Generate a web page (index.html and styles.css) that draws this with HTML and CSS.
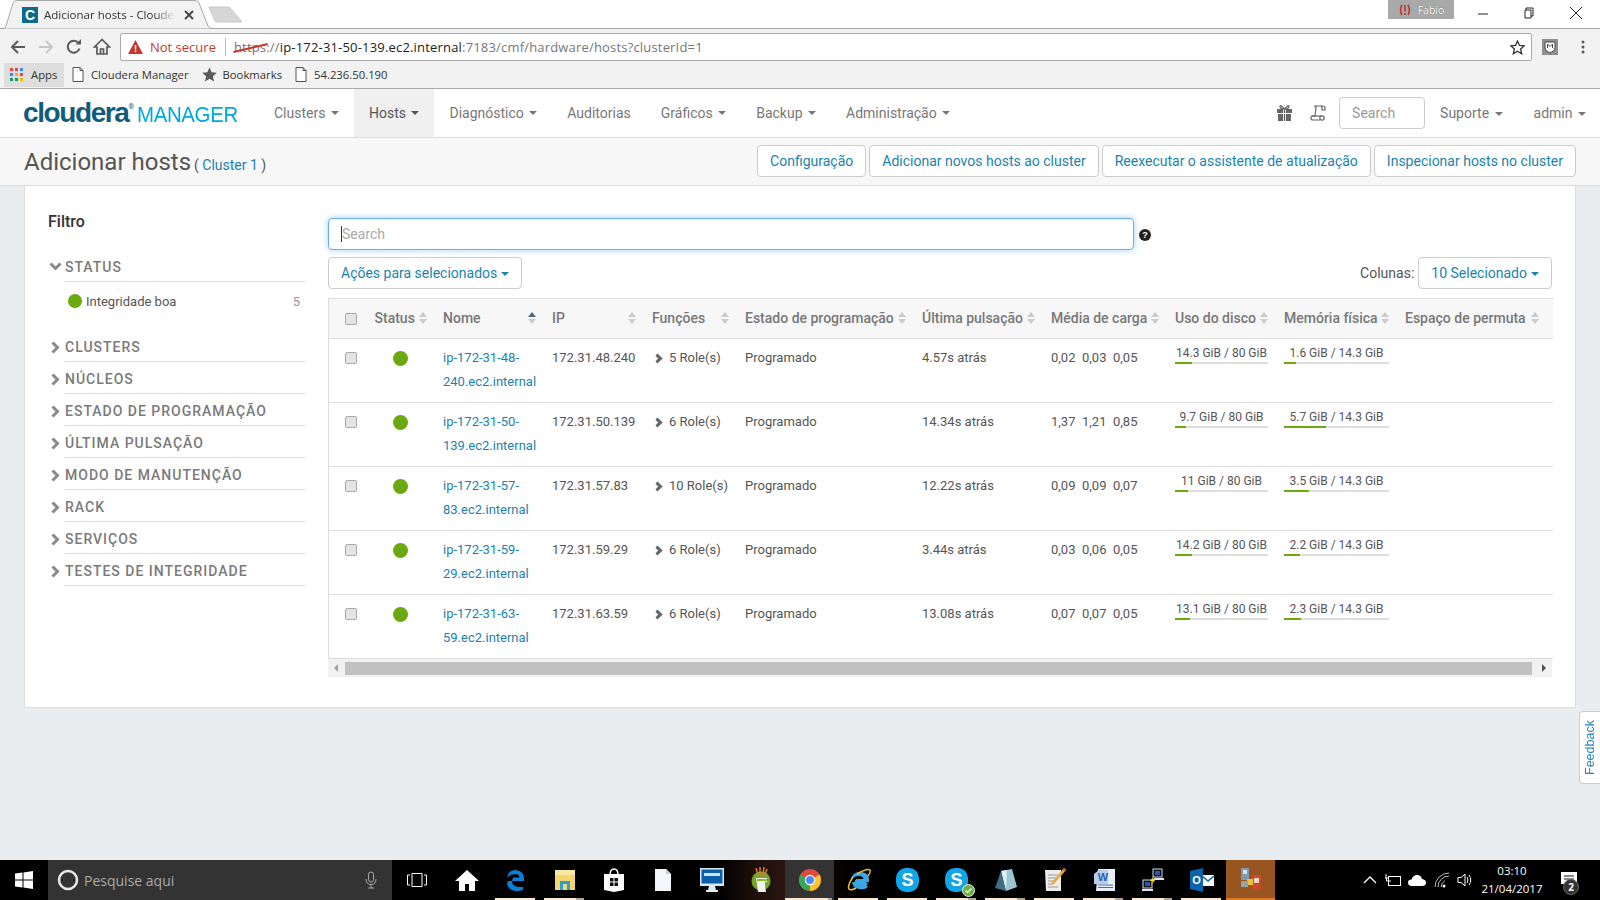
FILE: index.html
```html
<!DOCTYPE html>
<html lang="pt">
<head>
<meta charset="utf-8">
<title>Adicionar hosts - Cloudera Manager</title>
<link rel="stylesheet" href="styles.css">
</head>
<body>
<div class="screen">
  <header class="browser">
    <div class="tabstrip">
      <div class="tab">
        <svg class="tab-shape" width="214" height="29" viewBox="0 0 214 29"><path d="M0 28.500H3Q5 28.500 6 26L13 3Q14 .5 17 .5H195Q198 .5 199 3L208 26Q209 28.500 212 28.500H214" fill="#f2f2f2" stroke="#a8a8a8"/></svg>
        <span class="tab-favicon">C</span>
        <span class="tab-title">Adicionar hosts - Cloude</span>
        <svg class="tab-close" width="10" height="10" viewBox="0 0 10 10"><path d="M1 1L9 9M9 1L1 9" stroke="#444" stroke-width="1.800"/></svg>
      </div>
      <svg class="newtab" width="36" height="18" viewBox="0 0 36 18"><path d="M1 1H20Q22 1 23 3L34 16H9Q7 16 6.500 14Z" fill="#d6d6d6" stroke="#c8c8c8"/></svg>
      <div class="strip-fill"></div>
      <div class="profile"><svg width="14" height="12" viewBox="0 0 14 12"><path d="M4 1Q1 6 4 11M10 1Q13 6 10 11" fill="none" stroke="#c0352b" stroke-width="1.600"/><path d="M7 1V7.500M7 9V11" stroke="#c0352b" stroke-width="1.600"/></svg><span>Fabio</span></div>
      <div class="winctl">
        <svg width="12" height="12" viewBox="0 0 12 12"><path d="M1 7H11" stroke="#222" stroke-width="1"/></svg>
        <svg width="12" height="12" viewBox="0 0 12 12"><path d="M3 3V1H10V9H8M2 3H8V11H2Z" fill="none" stroke="#222"/></svg>
        <svg width="14" height="14" viewBox="0 0 14 14"><path d="M1 1L13 13M13 1L1 13" stroke="#222"/></svg>
      </div>
    </div>
    <div class="toolbar">
      <svg class="tool" width="16" height="16" viewBox="0 0 16 16"><path d="M15 8H2M8 2L2 8L8 14" fill="none" stroke="#5a5a5a" stroke-width="2"/></svg>
      <svg class="tool" width="16" height="16" viewBox="0 0 16 16"><path d="M1 8H14M8 2L14 8L8 14" fill="none" stroke="#c8c8c8" stroke-width="2"/></svg>
      <svg class="tool" width="16" height="16" viewBox="0 0 16 16"><path d="M13.500 9.500A6 6 0 1 1 12.500 4" fill="none" stroke="#5a5a5a" stroke-width="2"/><path d="M9.500 5.500H15V0Z" fill="#5a5a5a"/></svg>
      <svg class="tool tool-home" width="18" height="18" viewBox="0 0 18 18"><path d="M9 1.500L1.500 9H4V16H14V9H16.500ZM7.500 16V11H10.500V16" fill="none" stroke="#5a5a5a" stroke-width="1.700"/></svg>
      <div class="omnibox">
        <svg width="15" height="14" viewBox="0 0 15 14"><path d="M7.500 0L15 14H0Z" fill="#c5392b"/><path d="M7.500 5V9.500M7.500 10.500V12" stroke="#fff" stroke-width="1.500"/></svg>
        <span class="notsecure">Not secure</span>
        <span class="omni-sep"></span>
        <span class="url"><span class="https">https</span><span class="url-dim">://</span>ip-172-31-50-139.ec2.internal<span class="url-dim">:7183/cmf/hardware/hosts?clusterId=1</span></span>
        <svg class="omni-star" width="15" height="15" viewBox="0 0 15 15"><path d="M7.500 1L9.400 5.500L14.200 5.900L10.600 9L11.700 13.800L7.500 11.300L3.300 13.800L4.400 9L.8 5.900L5.600 5.500Z" fill="none" stroke="#333" stroke-width="1.300"/></svg>
      </div>
      <svg class="ext" width="16" height="16" viewBox="0 0 16 16"><rect width="16" height="16" fill="#8f8f8f"/><path d="M3 3H13V9Q13 12 8 14Q3 12 3 9Z" fill="#fff" stroke="#444"/><path d="M5.500 9V5L8 7.500L10.500 5V9" fill="none" stroke="#444"/></svg>
      <svg class="kebab" width="4" height="14" viewBox="0 0 4 14"><circle cx="2" cy="2" r="1.500" fill="#5a5a5a"/><circle cx="2" cy="7" r="1.500" fill="#5a5a5a"/><circle cx="2" cy="12" r="1.500" fill="#5a5a5a"/></svg>
    </div>
    <div class="bookmarks">
      <div class="bm bm-apps">
        <svg width="14" height="14" viewBox="0 0 14 14"><g><rect x="0" y="0" width="3" height="3" fill="#e8453c"/><rect x="5" y="0" width="3" height="3" fill="#e8453c"/><rect x="10" y="0" width="3" height="3" fill="#4285f4"/><rect x="0" y="5" width="3" height="3" fill="#4285f4"/><rect x="5" y="5" width="3" height="3" fill="#f4b400"/><rect x="10" y="5" width="3" height="3" fill="#e8453c"/><rect x="0" y="10" width="3" height="3" fill="#0f9d58"/><rect x="5" y="10" width="3" height="3" fill="#0f9d58"/><rect x="10" y="10" width="3" height="3" fill="#f4b400"/></g></svg>
        <span>Apps</span>
      </div>
      <div class="bm">
        <svg width="12" height="15" viewBox="0 0 12 15"><path d="M1 .5H8L11 3.500V14.500H1ZM8 .5V3.500H11" fill="#fff" stroke="#555"/></svg>
        <span>Cloudera Manager</span>
      </div>
      <div class="bm bm-star">
        <svg width="15" height="15" viewBox="0 0 15 15"><path d="M7.500 .5L9.600 5.300L14.800 5.800L10.900 9.200L12 14.400L7.500 11.700L3 14.400L4.100 9.200L.2 5.800L5.400 5.300Z" fill="#5a5a5a"/></svg>
        <span>Bookmarks</span>
      </div>
      <div class="bm">
        <svg width="12" height="15" viewBox="0 0 12 15"><path d="M1 .5H8L11 3.500V14.500H1ZM8 .5V3.500H11" fill="#fff" stroke="#555"/></svg>
        <span>54.236.50.190</span>
      </div>
    </div>
  </header>

  <nav class="navbar">
    <div class="logo"><span class="logo-a">cloudera</span><span class="logo-r">®</span><span class="logo-b">MANAGER</span></div>
    <ul class="menu">
      <li class="menu-item">Clusters<i class="caret"></i></li>
      <li class="menu-item is-active">Hosts<i class="caret"></i></li>
      <li class="menu-item">Diagnóstico<i class="caret"></i></li>
      <li class="menu-item">Auditorias</li>
      <li class="menu-item">Gráficos<i class="caret"></i></li>
      <li class="menu-item">Backup<i class="caret"></i></li>
      <li class="menu-item">Administração<i class="caret"></i></li>
    </ul>
    <div class="nav-right">
      <svg class="nav-icon nav-gift" width="15" height="16" viewBox="0 0 15 16"><path d="M0 4H15V8H0ZM1 9H14V16H1Z" fill="#666"/><path d="M6.500 4V16M8.500 4V16" stroke="#fff" stroke-width=".8"/><path d="M7.500 4Q3 4 3 1.500T7.500 4Q12 4 12 1.500T7.500 4Z" fill="none" stroke="#666" stroke-width="1.200"/></svg>
      <svg class="nav-icon nav-log" width="16" height="16" viewBox="0 0 16 16"><path d="M4 1H13Q15 1 15 3V5H12V3Q12 1 10 1M4 1Q6 1 6 3L5 11H2Q1 11 1 13Q1 15 3 15H10" fill="none" stroke="#666" stroke-width="1.200"/><path d="M2 11H11" stroke="#666" stroke-width="1.200"/><circle cx="12" cy="13" r="2.200" fill="none" stroke="#666" stroke-width="1.200"/></svg>
      <input class="nav-search" type="text" placeholder="Search">
      <span class="nav-link">Suporte<i class="caret"></i></span>
      <span class="nav-link">admin<i class="caret"></i></span>
    </div>
  </nav>

  <div class="titlebar">
    <h1 class="page-title">Adicionar hosts</h1>
    <span class="page-sub">( <a class="link">Cluster 1</a> )</span>
    <div class="title-actions">
      <button class="btn">Configuração</button>
      <button class="btn">Adicionar novos hosts ao cluster</button>
      <button class="btn">Reexecutar o assistente de atualização</button>
      <button class="btn">Inspecionar hosts no cluster</button>
    </div>
  </div>

  <main class="content">
    <section class="card">
      <aside class="filters">
        <h2 class="filters-title">Filtro</h2>
        <div class="facet facet-open">
          <svg class="chev chev-down" width="13" height="9" viewBox="0 0 13 9"><path d="M1.500 1.500L6.500 6.500L11.500 1.500" fill="none" stroke="#8a8a8a" stroke-width="3"/></svg>
          <span class="facet-name">STATUS</span>
        </div>
        <div class="facet-value"><i class="dot dot-sm"></i><span class="facet-label">Integridade boa</span><span class="facet-count">5</span></div>
        <div class="facet facet-first"><svg class="chev" width="9" height="13" viewBox="0 0 9 13"><path d="M1.500 1.500L6.500 6.500L1.500 11.500" fill="none" stroke="#8a8a8a" stroke-width="3"/></svg><span class="facet-name">CLUSTERS</span></div>
        <div class="facet"><svg class="chev" width="9" height="13" viewBox="0 0 9 13"><path d="M1.500 1.500L6.500 6.500L1.500 11.500" fill="none" stroke="#8a8a8a" stroke-width="3"/></svg><span class="facet-name">NÚCLEOS</span></div>
        <div class="facet"><svg class="chev" width="9" height="13" viewBox="0 0 9 13"><path d="M1.500 1.500L6.500 6.500L1.500 11.500" fill="none" stroke="#8a8a8a" stroke-width="3"/></svg><span class="facet-name">ESTADO DE PROGRAMAÇÃO</span></div>
        <div class="facet"><svg class="chev" width="9" height="13" viewBox="0 0 9 13"><path d="M1.500 1.500L6.500 6.500L1.500 11.500" fill="none" stroke="#8a8a8a" stroke-width="3"/></svg><span class="facet-name">ÚLTIMA PULSAÇÃO</span></div>
        <div class="facet"><svg class="chev" width="9" height="13" viewBox="0 0 9 13"><path d="M1.500 1.500L6.500 6.500L1.500 11.500" fill="none" stroke="#8a8a8a" stroke-width="3"/></svg><span class="facet-name">MODO DE MANUTENÇÃO</span></div>
        <div class="facet"><svg class="chev" width="9" height="13" viewBox="0 0 9 13"><path d="M1.500 1.500L6.500 6.500L1.500 11.500" fill="none" stroke="#8a8a8a" stroke-width="3"/></svg><span class="facet-name">RACK</span></div>
        <div class="facet"><svg class="chev" width="9" height="13" viewBox="0 0 9 13"><path d="M1.500 1.500L6.500 6.500L1.500 11.500" fill="none" stroke="#8a8a8a" stroke-width="3"/></svg><span class="facet-name">SERVIÇOS</span></div>
        <div class="facet"><svg class="chev" width="9" height="13" viewBox="0 0 9 13"><path d="M1.500 1.500L6.500 6.500L1.500 11.500" fill="none" stroke="#8a8a8a" stroke-width="3"/></svg><span class="facet-name">TESTES DE INTEGRIDADE</span></div>
      </aside>

      <div class="results">
        <div class="search-row">
          <div class="search-box"><i class="cursor"></i><span class="search-ph">Search</span></div>
          <span class="help">?</span>
        </div>
        <div class="action-row">
          <button class="btn">Ações para selecionados<i class="caret caret-blue"></i></button>
          <div class="columns"><span class="columns-label">Colunas:</span><button class="btn">10 Selecionado<i class="caret caret-blue"></i></button></div>
        </div>
        <table class="hosts">
          <colgroup><col class="c-chk"><col class="c-status"><col class="c-name"><col class="c-ip"><col class="c-roles"><col class="c-state"><col class="c-beat"><col class="c-load"><col class="c-disk"><col class="c-mem"><col class="c-swap"></colgroup>
          <thead>
            <tr>
              <th class="cell-chk"><input class="chk" type="checkbox"></th>
              <th><div class="th-in">Status<i class="sort"></i></div></th>
              <th><div class="th-in">Nome<i class="sort sort-asc"></i></div></th>
              <th><div class="th-in">IP<i class="sort"></i></div></th>
              <th><div class="th-in">Funções<i class="sort"></i></div></th>
              <th><div class="th-in">Estado de programação<i class="sort"></i></div></th>
              <th><div class="th-in">Última pulsação<i class="sort"></i></div></th>
              <th><div class="th-in">Média de carga<i class="sort"></i></div></th>
              <th><div class="th-in">Uso do disco<i class="sort"></i></div></th>
              <th><div class="th-in">Memória física<i class="sort"></i></div></th>
              <th class="th-last"><div class="th-in">Espaço de permuta<i class="sort"></i></div></th>
            </tr>
          </thead>
          <tbody>
            <tr>
              <td class="cell-chk"><input class="chk" type="checkbox"></td><td class="cell-status"><i class="dot"></i></td>
              <td><a class="link">ip-172-31-48-<br>240.ec2.internal</a></td><td>172.31.48.240</td>
              <td><span class="roles"><i class="role-chev"></i>5 Role(s)</span></td><td>Programado</td><td>4.57s atrás</td>
              <td><span class="load">0,02</span><span class="load">0,03</span><span class="load">0,05</span></td>
              <td class="cell-usage"><div class="usage"><span>14.3 GiB / 80 GiB</span><div class="bar"><div class="bar-fill" style="width:18%"></div></div></div></td>
              <td class="cell-usage"><div class="usage"><span>1.6 GiB / 14.3 GiB</span><div class="bar"><div class="bar-fill" style="width:11.500%"></div></div></div></td><td></td>
            </tr>
            <tr>
              <td class="cell-chk"><input class="chk" type="checkbox"></td><td class="cell-status"><i class="dot"></i></td>
              <td><a class="link">ip-172-31-50-<br>139.ec2.internal</a></td><td>172.31.50.139</td>
              <td><span class="roles"><i class="role-chev"></i>6 Role(s)</span></td><td>Programado</td><td>14.34s atrás</td>
              <td><span class="load">1,37</span><span class="load">1,21</span><span class="load">0,85</span></td>
              <td class="cell-usage"><div class="usage"><span>9.7 GiB / 80 GiB</span><div class="bar"><div class="bar-fill" style="width:12%"></div></div></div></td>
              <td class="cell-usage"><div class="usage"><span>5.7 GiB / 14.3 GiB</span><div class="bar"><div class="bar-fill" style="width:40%"></div></div></div></td><td></td>
            </tr>
            <tr>
              <td class="cell-chk"><input class="chk" type="checkbox"></td><td class="cell-status"><i class="dot"></i></td>
              <td><a class="link">ip-172-31-57-<br>83.ec2.internal</a></td><td>172.31.57.83</td>
              <td><span class="roles"><i class="role-chev"></i>10 Role(s)</span></td><td>Programado</td><td>12.22s atrás</td>
              <td><span class="load">0,09</span><span class="load">0,09</span><span class="load">0,07</span></td>
              <td class="cell-usage"><div class="usage"><span>11 GiB / 80 GiB</span><div class="bar"><div class="bar-fill" style="width:14%"></div></div></div></td>
              <td class="cell-usage"><div class="usage"><span>3.5 GiB / 14.3 GiB</span><div class="bar"><div class="bar-fill" style="width:24%"></div></div></div></td><td></td>
            </tr>
            <tr>
              <td class="cell-chk"><input class="chk" type="checkbox"></td><td class="cell-status"><i class="dot"></i></td>
              <td><a class="link">ip-172-31-59-<br>29.ec2.internal</a></td><td>172.31.59.29</td>
              <td><span class="roles"><i class="role-chev"></i>6 Role(s)</span></td><td>Programado</td><td>3.44s atrás</td>
              <td><span class="load">0,03</span><span class="load">0,06</span><span class="load">0,05</span></td>
              <td class="cell-usage"><div class="usage"><span>14.2 GiB / 80 GiB</span><div class="bar"><div class="bar-fill" style="width:18%"></div></div></div></td>
              <td class="cell-usage"><div class="usage"><span>2.2 GiB / 14.3 GiB</span><div class="bar"><div class="bar-fill" style="width:15%"></div></div></div></td><td></td>
            </tr>
            <tr>
              <td class="cell-chk"><input class="chk" type="checkbox"></td><td class="cell-status"><i class="dot"></i></td>
              <td><a class="link">ip-172-31-63-<br>59.ec2.internal</a></td><td>172.31.63.59</td>
              <td><span class="roles"><i class="role-chev"></i>6 Role(s)</span></td><td>Programado</td><td>13.08s atrás</td>
              <td><span class="load">0,07</span><span class="load">0,07</span><span class="load">0,05</span></td>
              <td class="cell-usage"><div class="usage"><span>13.1 GiB / 80 GiB</span><div class="bar"><div class="bar-fill" style="width:16%"></div></div></div></td>
              <td class="cell-usage"><div class="usage"><span>2.3 GiB / 14.3 GiB</span><div class="bar"><div class="bar-fill" style="width:16%"></div></div></div></td><td></td>
            </tr>
          </tbody>
        </table>
        <div class="hscroll">
          <i class="arrow-left"></i>
          <div class="thumb"></div>
          <i class="arrow-right"></i>
        </div>
      </div>
    </section>
    <a class="feedback">Feedback</a>
  </main>

  <footer class="taskbar">
    <div class="start"><svg width="18" height="18" viewBox="0 0 18 18"><path d="M0 2.600L7.500 1.500V8.500H0ZM8.500 1.400L18 0V8.500H8.500ZM0 9.500H7.500V16.500L0 15.400ZM8.500 9.500H18V18L8.500 16.600Z" fill="#fff"/></svg></div>
    <div class="cortana">
      <svg width="22" height="22" viewBox="0 0 22 22"><circle cx="11" cy="11" r="9" fill="none" stroke="#e8e8e8" stroke-width="2.500"/></svg>
      <span class="cortana-text">Pesquise aqui</span>
      <svg class="mic" width="12" height="18" viewBox="0 0 12 18"><rect x="3.500" y="1" width="5" height="10" rx="2.500" fill="none" stroke="#aaa"/><path d="M1 8Q1 13.500 6 13.500T11 8M6 13.500V17M3 17H9" fill="none" stroke="#aaa"/></svg>
    </div>
    <div class="tasks">
      <div class="task task-view"><svg width="20" height="14" viewBox="0 0 20 14"><path d="M5 .5H15V13.500H5ZM3 2H.5V12H3M17 2H19.500V12H17" fill="none" stroke="#fff"/></svg></div>
      <div class="task"><svg width="24" height="22" viewBox="0 0 24 22"><path d="M12 1L24 12H20V22H14V15H10V22H4V12H0Z" fill="#fff"/></svg></div>
      <div class="task is-run"><svg width="22" height="24" viewBox="0 0 22 24"><path d="M3 13H19Q20 3 11 2Q3 2 2 10Q5 6 10 6Q14 6 14.500 9.500H8Q4 20 18 19V22Q9 25 4 20Q1 17 3 13Z" fill="#0c7fd4"/></svg></div>
      <div class="task is-run is-split"><svg width="22" height="22" viewBox="0 0 22 22"><path d="M1 1H9L11 4H21V21H1Z" fill="#f5d76e"/><rect x="1" y="1" width="20" height="5" fill="#f9e8a0"/><path d="M6 21V12H16V21Z" fill="#2a9fd6"/><rect x="9" y="15" width="4" height="6" fill="#f5d76e"/></svg></div>
      <div class="task"><svg width="22" height="24" viewBox="0 0 22 24"><path d="M7 7Q7 1 11 1T15 7" fill="none" stroke="#fff" stroke-width="1.500"/><path d="M1 6H21V22L11 24L1 22Z" fill="#fff"/><path d="M7 10H10.500V13.500H7ZM11.500 10H15V13.500H11.500ZM7 14.500H10.500V18H7ZM11.500 14.500H15V18H11.500Z" fill="#111"/></svg></div>
      <div class="task"><svg width="16" height="22" viewBox="0 0 16 22"><path d="M0 0H11L16 5V22H0Z" fill="#f4f6f9"/><path d="M11 0V5H16" fill="#c8ccd2"/></svg></div>
      <div class="task"><svg width="26" height="24" viewBox="0 0 26 24"><rect x="1" y="0" width="24" height="18" fill="#d8e8f4"/><rect x="2.500" y="1.500" width="21" height="14" fill="#0a5fa8"/><rect x="5" y="5" width="16" height="3" fill="#cfe3f5"/><path d="M10 18H16L17 22H19V24H7V22H9Z" fill="#dfe9f2"/></svg></div>
      <div class="task"><svg width="20" height="26" viewBox="0 0 20 26"><circle cx="10" cy="14" r="9.500" fill="#76a52a"/><path d="M5 1L7 8M9 0V8M13 0L12 8M16 2L14 8" stroke="#e07a3a" stroke-width="1.500"/><path d="M5 11H16V15H14V19L15 25H7L6 17Z" fill="#f2f2f2"/><path d="M6 12H16V14H6Z" fill="#7fbf2a"/></svg></div>
      <div class="task task-chrome"><svg width="22" height="22" viewBox="0 0 22 22"><circle cx="11" cy="11" r="11" fill="#e04a3a"/><path d="M11 11L20.500 5.500A11 11 0 0 1 11 22Z" fill="#f7c531"/><path d="M11 11L11 22A11 11 0 0 1 1.500 5.500Z" fill="#3aa757"/><circle cx="11" cy="11" r="5.200" fill="#fff"/><circle cx="11" cy="11" r="4" fill="#4c8bf5"/></svg></div>
      <div class="task is-run"><svg width="24" height="24" viewBox="0 0 24 24"><path d="M18 14H22Q23 4 13 4Q5 4 4 12Q7 8 12 8Q16 8 16.500 11H9Q6 19 19 18L21 15" fill="#3ba8e6"/><path d="M8 12H19V14H8Z" fill="#3ba8e6"/><path d="M5 14Q6 20 12 21Q18 22 21 19L19 17Q9 19 9 14Z" fill="#3ba8e6"/><path d="M6 9Q0 18 2 21Q4 23 9 20M10 6Q20 0 23 2Q24 4 21 8" fill="none" stroke="#f2c029" stroke-width="1.500"/></svg></div>
      <div class="task is-run"><span class="skype">S</span></div>
      <div class="task is-run is-split task-skype2"><span class="skype">S</span><svg class="skype-ok" width="13" height="13" viewBox="0 0 13 13"><circle cx="6.500" cy="6.500" r="6" fill="#6cb33f" stroke="#e8efe2"/><path d="M3.500 6.500L5.500 8.500L9.500 4.500" fill="none" stroke="#fff" stroke-width="1.300"/></svg></div>
      <div class="task is-run is-split"><svg width="24" height="24" viewBox="0 0 24 24"><path d="M7 3L18 1L23 19L12 23Z" fill="#9cc6d4"/><path d="M7 3L13 2L12 23Z" fill="#dfeef3"/><path d="M1 20L7 3L12 23Z" fill="#3f6f80"/></svg></div>
      <div class="task is-run"><svg width="24" height="26" viewBox="0 0 24 26"><path d="M2 3H18V24H3Z" fill="#ececec"/><path d="M5 8H15M5 11H13M5 14H11M5 17H10M5 20H15" stroke="#999"/><path d="M21 1L23 3L11 17L8 18L9 15Z" fill="#e7a93a"/><path d="M21 1L23 3L21.500 4.500L19.500 2.500Z" fill="#c9574a"/></svg></div>
      <div class="task is-run is-split"><svg width="24" height="24" viewBox="0 0 24 24"><path d="M6 1H23V23H4Z" fill="#e8eef6"/><path d="M2 6L7 2H16V16H2Z" fill="#b9cdea"/><text x="11" y="13" class="icon-letter word-letter">W</text><path d="M6 17H21M6 19.500H21" stroke="#3a6fc0" stroke-width="1.200"/></svg></div>
      <div class="task is-run is-split"><svg width="24" height="24" viewBox="0 0 24 24"><rect x="12" y="1" width="9" height="8" fill="#111" stroke="#cfd8e6"/><rect x="14" y="3" width="5" height="4" fill="#2a52c9"/><rect x="2" y="12" width="9" height="8" fill="#111" stroke="#cfd8e6"/><rect x="4" y="14" width="5" height="4" fill="#2a52c9"/><rect x="1" y="21" width="11" height="2" fill="#dfe3e8"/><rect x="13" y="10" width="10" height="2" fill="#dfe3e8"/><path d="M13 8L9 13H12L9 18L15 11H12Z" fill="#f6e11e"/></svg></div>
      <div class="task is-run"><svg width="24" height="24" viewBox="0 0 24 24"><path d="M12 7H24V18H12Z" fill="#fff"/><path d="M12 8L18 13L24 8" fill="none" stroke="#0a64ad" stroke-width="1.500"/><path d="M0 3L13 0V24L0 21Z" fill="#0a64ad"/><text x="6.500" y="16" class="icon-letter">O</text></svg></div>
      <div class="task task-current"><svg width="24" height="24" viewBox="0 0 24 24"><rect x="2" y="1" width="8" height="12" fill="#7f9bb0"/><rect x="4" y="3" width="4" height="4" fill="#d7e4ee"/><rect x="13" y="8" width="9" height="15" fill="#c94a2b"/><rect x="15" y="11" width="5" height="5" fill="#f2d6c7"/><rect x="8" y="12" width="6" height="6" fill="#f1c232"/><path d="M2 14H9V20H2Z" fill="#90a4ae"/></svg></div>
    </div>
    <div class="tray">
      <svg width="14" height="8" viewBox="0 0 14 8"><path d="M1 7L7 1L13 7" fill="none" stroke="#fff" stroke-width="1.300"/></svg>
      <svg width="16" height="14" viewBox="0 0 16 14"><rect x="3.500" y="3.500" width="12" height="9" fill="none" stroke="#fff"/><path d="M1 1V5M0 5H3M1.500 5V8H6" fill="none" stroke="#fff"/></svg>
      <svg width="18" height="12" viewBox="0 0 18 12"><path d="M4 12Q0 12 0 8.500Q0 5.500 3.500 5.500Q5 1 9 1Q13 1 14 5Q18 5.500 18 8.500Q18 12 14 12Z" fill="#fff"/></svg>
      <svg width="16" height="16" viewBox="0 0 16 16"><path d="M1 15A14 14 0 0 1 15 1M4 15A11 11 0 0 1 15 4M7 15A8 8 0 0 1 11 8.500" fill="none" stroke="#bbb"/><circle cx="10" cy="14" r="1.500" fill="#fff"/></svg>
      <svg width="16" height="16" viewBox="0 0 16 16"><path d="M1 5.500H4L8 2V14L4 10.500H1Z" fill="none" stroke="#fff"/><path d="M10 5Q12 8 10 11M12 3Q15.500 8 12 13" fill="none" stroke="#fff"/></svg>
    </div>
    <div class="clock"><span>03:10</span><span>21/04/2017</span></div>
    <div class="notif">
      <svg width="16" height="16" viewBox="0 0 16 16"><path d="M0 0H16V12H6L3 16V12H0Z" fill="#fff"/><path d="M3 4H13M3 7H13" stroke="#111"/></svg>
      <span class="notif-count">2</span>
    </div>
  </footer>
</div>
</body>
</html>
```
FILE: styles.css
```css
* { box-sizing: border-box; }
html, body { margin: 0; height: 100%; overflow: hidden; }
body { font-family: Roboto, "Liberation Sans", sans-serif; font-size: 13px; color: #444; background: #e9edf0; }
.screen { display: flex; flex-direction: column; height: 900px; width: 1600px; }

/* browser chrome */
.browser { background: #f2f2f2; font-family: "Open Sans", "Liberation Sans", sans-serif; flex: none; }
.tabstrip { display: flex; height: 29px; background: #fff; align-items: flex-start; }
.tab { position: relative; display: flex; align-items: center; width: 214px; height: 29px; flex: none; padding-left: 22px; }
.tab-shape { position: absolute; left: 0; top: 0; }
.tab-favicon { position: relative; width: 16px; height: 16px; background: #0f6a8b; color: #fff; font: bold 14px/16px "Liberation Sans", sans-serif; text-align: center; flex: none; margin-top: 1px; }
.tab-title { position: relative; margin-left: 6px; font-size: 11.500px; color: #333; width: 131px; white-space: nowrap; -webkit-mask-image: linear-gradient(to right, #000 85%, transparent); mask-image: linear-gradient(to right, #000 85%, transparent); }
.tab-close { position: relative; margin-left: 9px; }
.newtab { margin: 6px 0 0 -6px; flex: none; }
.strip-fill { flex: 1; }
.profile { width: 66px; height: 19px; background: #a9a9a9; color: #fff; display: flex; align-items: center; justify-content: center; gap: 6px; font-size: 10.500px; text-shadow: 0 0 1px #555; }
.winctl { display: flex; width: 146px; justify-content: space-around; align-items: center; height: 26px; padding-left: 6px; }
.toolbar { display: flex; align-items: center; height: 33px; border-top: 1px solid #a8a8a8; padding: 4px 0 0 10px; margin-top: -1px; }
.tool { flex: none; margin-right: 12px; }
.tool-home { margin-left: -1px; margin-right: 13px; }
.omnibox { flex: none; width: 1412px; height: 28px; margin-left: -4px; background: #fff; border: 1px solid #a9a9a9; border-radius: 2px; display: flex; align-items: center; padding: 0 6px 0 7px; font-size: 13px; }
.notsecure { color: #c5392b; margin-left: 7px; }
.omni-sep { width: 1px; height: 18px; background: #bbb; margin: 0 8px 0 9px; }
.url { color: #222; flex: 1; white-space: nowrap; letter-spacing: .18px; }
.url-dim { color: #777; }
.https { color: #8a6a66; position: relative; }
.https::after { content: ""; position: absolute; left: -1px; right: -2px; top: 9px; height: 1.500px; background: #c5392b; transform: rotate(-13deg); }
.ext { margin-left: 10px; flex: none; }
.kebab { margin-left: 23px; flex: none; }
.bookmarks { display: flex; align-items: center; height: 28px; padding-left: 4px; font-size: 11.300px; color: #333; border-bottom: 1px solid #a8a8a8; }
.bm { display: flex; align-items: center; gap: 7px; margin-right: 3px; height: 24px; padding: 0 5px; }
.bm-star { gap: 6px; }
.bm-apps { background: #dedede; width: 60px; padding-left: 6px; }

/* app nav */
.navbar { flex: none; display: flex; align-items: stretch; height: 49px; background: #fff; border-bottom: 1px solid #ddd; font-size: 14px; color: #777; }
.logo { width: 259px; padding: 9px 0 0 23px; display: flex; align-items: baseline; white-space: nowrap; }
.logo-a { font: bold 28px/30px "Liberation Sans", sans-serif; letter-spacing: -1.400px; color: #0f5c7c; }
.logo-r { font-size: 7px; color: #0f5c7c; position: relative; top: -13px; margin-right: 3px; }
.logo-b { font: 22px/30px "Liberation Sans", sans-serif; letter-spacing: -.4px; color: #00a6e0; transform: scaleX(.93); transform-origin: left; }
.menu { list-style: none; display: flex; margin: 0; padding: 0; flex: 1; }
.menu-item { padding: 0 15px; display: flex; align-items: center; white-space: nowrap; }
.menu-item.is-active { background: #f0f0f0; color: #555; }
.caret { display: inline-block; width: 0; height: 0; margin-left: 5.500px; border-top: 4px solid currentColor; border-left: 4px solid transparent; border-right: 4px solid transparent; vertical-align: middle; }
.nav-right { display: flex; align-items: center; padding-right: 14px; }
.nav-icon { flex: none; }
.nav-gift { margin-right: 18px; }
.nav-log { margin-right: 13px; }
.nav-search { width: 86px; height: 32px; border: 1px solid #ccc; border-radius: 4px; padding: 0 12px; font: 14px Roboto, sans-serif; margin-right: 15px; color: #777; }
.nav-search::placeholder { color: #999; }
.nav-link { white-space: nowrap; margin-right: 31px; }
.nav-link:last-child { margin-right: 0; }

/* title */
.titlebar { flex: none; height: 48px; background: #f7f7f7; border-bottom: 1px solid #ddd; display: flex; align-items: center; padding: 0 24px; }
.page-title { margin: 0 3px 0 0; font-size: 24px; font-weight: 400; color: #555; }
.page-sub { font-size: 14px; color: #555; margin-top: 7px; }
.link { color: #1a83ad; }
.title-actions { margin-left: auto; display: flex; gap: 3px; margin-bottom: 2px; }
.btn { height: 32px; padding: 0 12px; background: #fff; border: 1px solid #ccc; border-radius: 4px; color: #1a83ad; font: 14px Roboto, sans-serif; white-space: nowrap; }
.caret-blue { margin-left: 4px; }

/* main */
.content { flex: 1; position: relative; padding: 0 24px; }
.card { background: #fff; border: 1px solid #ddd; border-top: 0; display: flex; height: 522px; padding: 32px 23px 0 23px; gap: 23px; }
.filters { width: 257px; flex: none; }
.filters-title { margin: -6px 0 18px; font-size: 16px; font-weight: 500; color: #333; line-height: 20px; }
.facet { display: flex; align-items: center; height: 32px; position: relative; padding-left: 17px; }
.facet-name { flex: 1; align-self: stretch; display: flex; align-items: center; border-bottom: 1px solid #ddd; font-size: 14px; font-weight: 500; letter-spacing: 1px; color: #7a7a7a; padding-top: 3px; }
.chev { position: absolute; left: 3px; top: 11px; }
.chev-down { left: 1px; top: 12px; }
.facet-value { display: flex; align-items: center; height: 38px; padding: 0 5px 0 20px; font-size: 13px; color: #555; margin-bottom: 10px; }
.facet-label { margin-left: 4px; flex: 1; }
.facet-count { color: #999; }
.dot { display: inline-block; width: 15px; height: 15px; border-radius: 50%; background: #6aaa0f; }
.dot-sm { width: 14px; height: 14px; }
.results { flex: 1; min-width: 0; }
.search-row { display: flex; align-items: center; height: 32px; }
.search-box { width: 806px; height: 32px; border: 1px solid #66afe9; border-radius: 4px; box-shadow: 0 0 6px rgba(102,175,233,.6); display: flex; align-items: center; padding: 0 0 1px 12px; font-size: 14px; color: #aaa; }
.cursor { width: 1px; height: 16px; background: #333; }
.search-ph { margin-left: 0; }
.help { margin-left: 5px; width: 12px; height: 12px; border-radius: 50%; background: #222; color: #fff; font: bold 9px/12px "Liberation Sans", sans-serif; text-align: center; margin-top: 1px; }
.action-row { display: flex; justify-content: space-between; align-items: center; margin: 7px 0 9px; }
.columns { display: flex; align-items: center; gap: 4px; }
.columns-label { font-size: 14px; color: #555; }

/* table */
.hosts { border-collapse: collapse; table-layout: fixed; width: 1224px; border-left: 1px solid #ddd; }
.c-chk { width: 38px; } .c-status { width: 68.500px; } .c-name { width: 109px; } .c-ip { width: 100px; } .c-roles { width: 93px; } .c-state { width: 177px; } .c-beat { width: 129px; } .c-load { width: 124px; } .c-disk { width: 109px; } .c-mem { width: 121px; } .c-swap { width: 155.500px; }
.hosts th { height: 40px; background: #f7f7f7; border-top: 1px solid #ddd; border-bottom: 1px solid #ddd; padding: 0 8px 2px; font-size: 14px; font-weight: 500; color: #777; text-align: left; white-space: nowrap; }
.hosts .th-last { padding-right: 14px; }
.th-in { display: flex; justify-content: space-between; align-items: center; }
.hosts td { height: 64px; padding: 7px 8px 8px; vertical-align: top; line-height: 24px; border-bottom: 1px solid #ddd; white-space: nowrap; color: #555; }
.hosts .cell-chk { text-align: center; padding-left: 11px; padding-right: 0; }
.chk { appearance: none; -webkit-appearance: none; display: block; width: 12px; height: 12px; margin: 6px 0 0 5px; background: #e4e4e4; border: 1px solid #aaa; border-radius: 2px; }
th .chk { margin-top: 2px; }
.hosts .cell-status { padding-left: 26px; }
.dot { margin-top: 5px; }
.facet-value .dot { margin-top: 0; }
.sort { display: block; flex: none; width: 8px; height: 12px; position: relative; }
.sort::before, .sort::after { content: ""; position: absolute; left: 0; border-left: 4px solid transparent; border-right: 4px solid transparent; }
.sort::before { top: 0; border-bottom: 5px solid #ccc; }
.sort::after { bottom: 0; border-top: 5px solid #ccc; }
.sort-asc::before { border-bottom-color: #4a6b85; }
.roles { display: flex; align-items: center; }
.role-chev { width: 7px; height: 7px; border-top: 3px solid #666; border-right: 3px solid #666; transform: rotate(45deg); margin: 1px 8px 0 2px; flex: none; }
.load { display: inline-block; width: 31px; }
.hosts .cell-usage { padding-top: 5px; }
.usage { text-align: center; font-size: 12px; line-height: 18px; }
.usage span { display: block; }
.bar { height: 2px; background: #ddd; }
.bar-fill { height: 2px; background: #6aaa0f; }
.hscroll { display: flex; align-items: center; height: 18px; background: #f1f1f1; width: 1224px; }
.thumb { flex: 1; height: 13px; background: #c1c1c1; margin: 0 10px 0 7px; }
.arrow-left, .arrow-right { width: 0; height: 0; border-top: 4px solid transparent; border-bottom: 4px solid transparent; }
.arrow-left { border-right: 4px solid #a3a3a3; margin-left: 6px; }
.arrow-right { border-left: 4px solid #505050; margin-right: 6px; }
.feedback { position: absolute; right: 0; top: 525px; width: 21px; height: 73px; background: #fff; border: 1px solid #ccc; border-left: 0; writing-mode: vertical-rl; transform: rotate(180deg); transform-origin: center; font: 12.500px/20px "Liberation Sans", sans-serif; text-align: center; color: #2a84b8; border-radius: 0 4px 4px 0; }

/* taskbar */
.taskbar { flex: none; height: 40px; background: linear-gradient(90deg, #000 0, #000 45%, #1c0f0a 47%, #2a1410 49%, #000 53%, #000 100%); display: flex; align-items: center; color: #fff; }
.start { width: 48px; height: 40px; display: flex; align-items: center; justify-content: center; background: #000; }
.cortana { width: 344px; height: 40px; background: #333; display: flex; align-items: center; padding: 0 15px 0 9px; color: #aaa; font-family: "Open Sans", sans-serif; font-size: 14px; }
.cortana-text { margin-left: 5px; flex: 1; }
.tasks { display: flex; height: 40px; flex: none; }
.task { width: 49px; height: 40px; display: flex; align-items: center; justify-content: center; flex: none; position: relative; }
.task-view { width: 50px; }
.task.is-run::after { content: ""; position: absolute; left: 4px; right: 5px; bottom: 0; height: 2px; background: #fde8cc; }
.task.is-split::after { background: linear-gradient(90deg, #fde8cc 80%, #b5a48d 80%); }
.task-chrome { background: #333; }
.task-chrome::after { content: ""; position: absolute; left: 0; right: 2px; bottom: 0; height: 2px; background: linear-gradient(90deg, #fde8cc 92%, #b5a48d 92%); }
.task-current { background: #97561f; border-bottom: 2px solid #e07a1a; }
.skype { width: 23px; height: 24px; border-radius: 42%; background: #12a5e6; color: #fff; font: bold 18px/24px "Liberation Sans", sans-serif; text-align: center; display: block; }
.skype-ok { position: absolute; right: 6px; bottom: 3px; }
.icon-letter { font: bold 11px "Liberation Sans", sans-serif; fill: #fff; text-anchor: middle; }
.word-letter { fill: #2b5fb0; }
.tray { display: flex; align-items: center; margin-left: auto; gap: 7.500px; margin-right: -1px; }
.clock { width: 80px; display: flex; flex-direction: column; align-items: center; font-family: "Open Sans", sans-serif; font-size: 11.500px; line-height: 18px; }
.notif { width: 48px; position: relative; display: flex; justify-content: center; padding-right: 14px; }
.notif-count { position: absolute; left: 11px; top: 7px; width: 16px; height: 16px; border-radius: 50%; background: #333; border: 1px solid #666; font: bold 10px/14px "Open Sans", sans-serif; text-align: center; }
```
